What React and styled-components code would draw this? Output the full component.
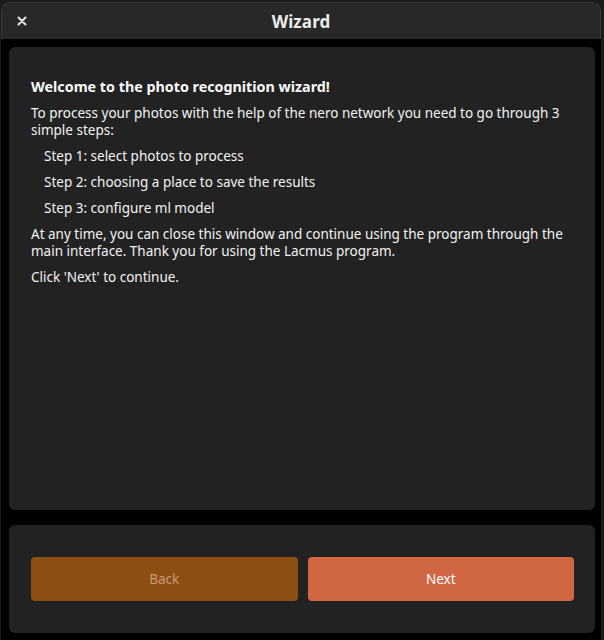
import styled, { createGlobalStyle } from 'styled-components';

const GlobalStyle = createGlobalStyle`
  html, body {
    margin: 0;
    padding: 0;
    background: #111;
  }
  body {
    font-family: 'Noto Sans', 'DejaVu Sans', sans-serif;
  }
  * {
    box-sizing: border-box;
  }
`;

const steps = [
  'Step 1: select photos to process',
  'Step 2: choosing a place to save the results',
  'Step 3: configure ml model',
];

function App() {
  return (
    <>
      <GlobalStyle />
      <Desktop>
        <Window>
          <TitleBar>
            <CloseButton type="button" aria-label="Close">
              <svg width="10" height="10" viewBox="0 0 10 10">
                <path
                  d="M1.5 1.5 L8.5 8.5 M8.5 1.5 L1.5 8.5"
                  stroke="#e6e6e6"
                  strokeWidth="2"
                  strokeLinecap="round"
                />
              </svg>
            </CloseButton>
            <Title>Wizard</Title>
          </TitleBar>

          <Body>
            <ContentPanel>
              <Heading>Welcome to the photo recognition wizard!</Heading>
              <Paragraph>
                To process your photos with the help of the nero network you
                need to go through 3 simple steps:
              </Paragraph>
              {steps.map((step) => (
                <Paragraph key={step} $indent>
                  {step}
                </Paragraph>
              ))}
              <Paragraph>
                At any time, you can close this window and continue using the
                program through the main interface. Thank you for using the
                Lacmus program.
              </Paragraph>
              <Paragraph>Click 'Next' to continue.</Paragraph>
            </ContentPanel>

            <FooterPanel>
              <NavButton type="button" $variant="back" disabled>
                Back
              </NavButton>
              <NavButton type="button" $variant="next">
                Next
              </NavButton>
            </FooterPanel>
          </Body>
        </Window>
      </Desktop>
    </>
  );
}

const Desktop = styled.div`
  width: 604px;
  height: 640px;
  padding: 2px 3px 0 1px;
  background: #1b1b1b;
  overflow: hidden;
`;

const Window = styled.div`
  height: 100%;
  display: flex;
  flex-direction: column;
  background: #000;
  border-radius: 8px 8px 0 0;
  overflow: hidden;
`;

const TitleBar = styled.div`
  position: relative;
  height: 37px;
  flex-shrink: 0;
  display: flex;
  align-items: center;
  justify-content: center;
  background: #282828;
  border: 1px solid #3a3a3a;
  border-bottom: none;
  border-radius: 8px 8px 0 0;
`;

const CloseButton = styled.button`
  position: absolute;
  left: 12px;
  top: 50%;
  transform: translateY(-50%);
  width: 16px;
  height: 16px;
  padding: 0;
  display: flex;
  align-items: center;
  justify-content: center;
  border: none;
  background: transparent;
`;

const Title = styled.h1`
  margin: 0;
  font-size: 17px;
  font-weight: 700;
  color: #ececec;
  letter-spacing: 0.1px;
`;

const Body = styled.div`
  flex: 1;
  display: flex;
  flex-direction: column;
  gap: 15px;
  padding: 8px 6px 7px 8px;
`;

const Panel = styled.div`
  background: #222222;
  border-radius: 6px;
`;

const ContentPanel = styled(Panel)`
  height: 463px;
  padding: 31px 18px 0 22px;
  color: #f2f2f2;
  font-size: 13.5px;
  line-height: 17px;
`;

const Heading = styled.h2`
  margin: 0 0 10px;
  font-size: 14.3px;
  font-weight: 700;
  line-height: 17px;
  color: #fafafa;
`;

const Paragraph = styled.p`
  margin: 0 0 9px;
  padding-left: ${({ $indent }) => ($indent ? '13px' : '0')};
`;

const FooterPanel = styled(Panel)`
  flex: 1;
  display: flex;
  align-items: center;
  gap: 10px;
  padding: 0 21px 0 22px;
`;

const NavButton = styled.button`
  flex: 1;
  height: 44px;
  border: none;
  border-radius: 4px;
  font-family: inherit;
  font-size: 13.5px;
  background: ${({ $variant }) => ($variant === 'back' ? '#8e4f12' : '#d16642')};
  color: ${({ $variant }) => ($variant === 'back' ? '#c49a78' : '#ffffff')};
`;

export default App;
